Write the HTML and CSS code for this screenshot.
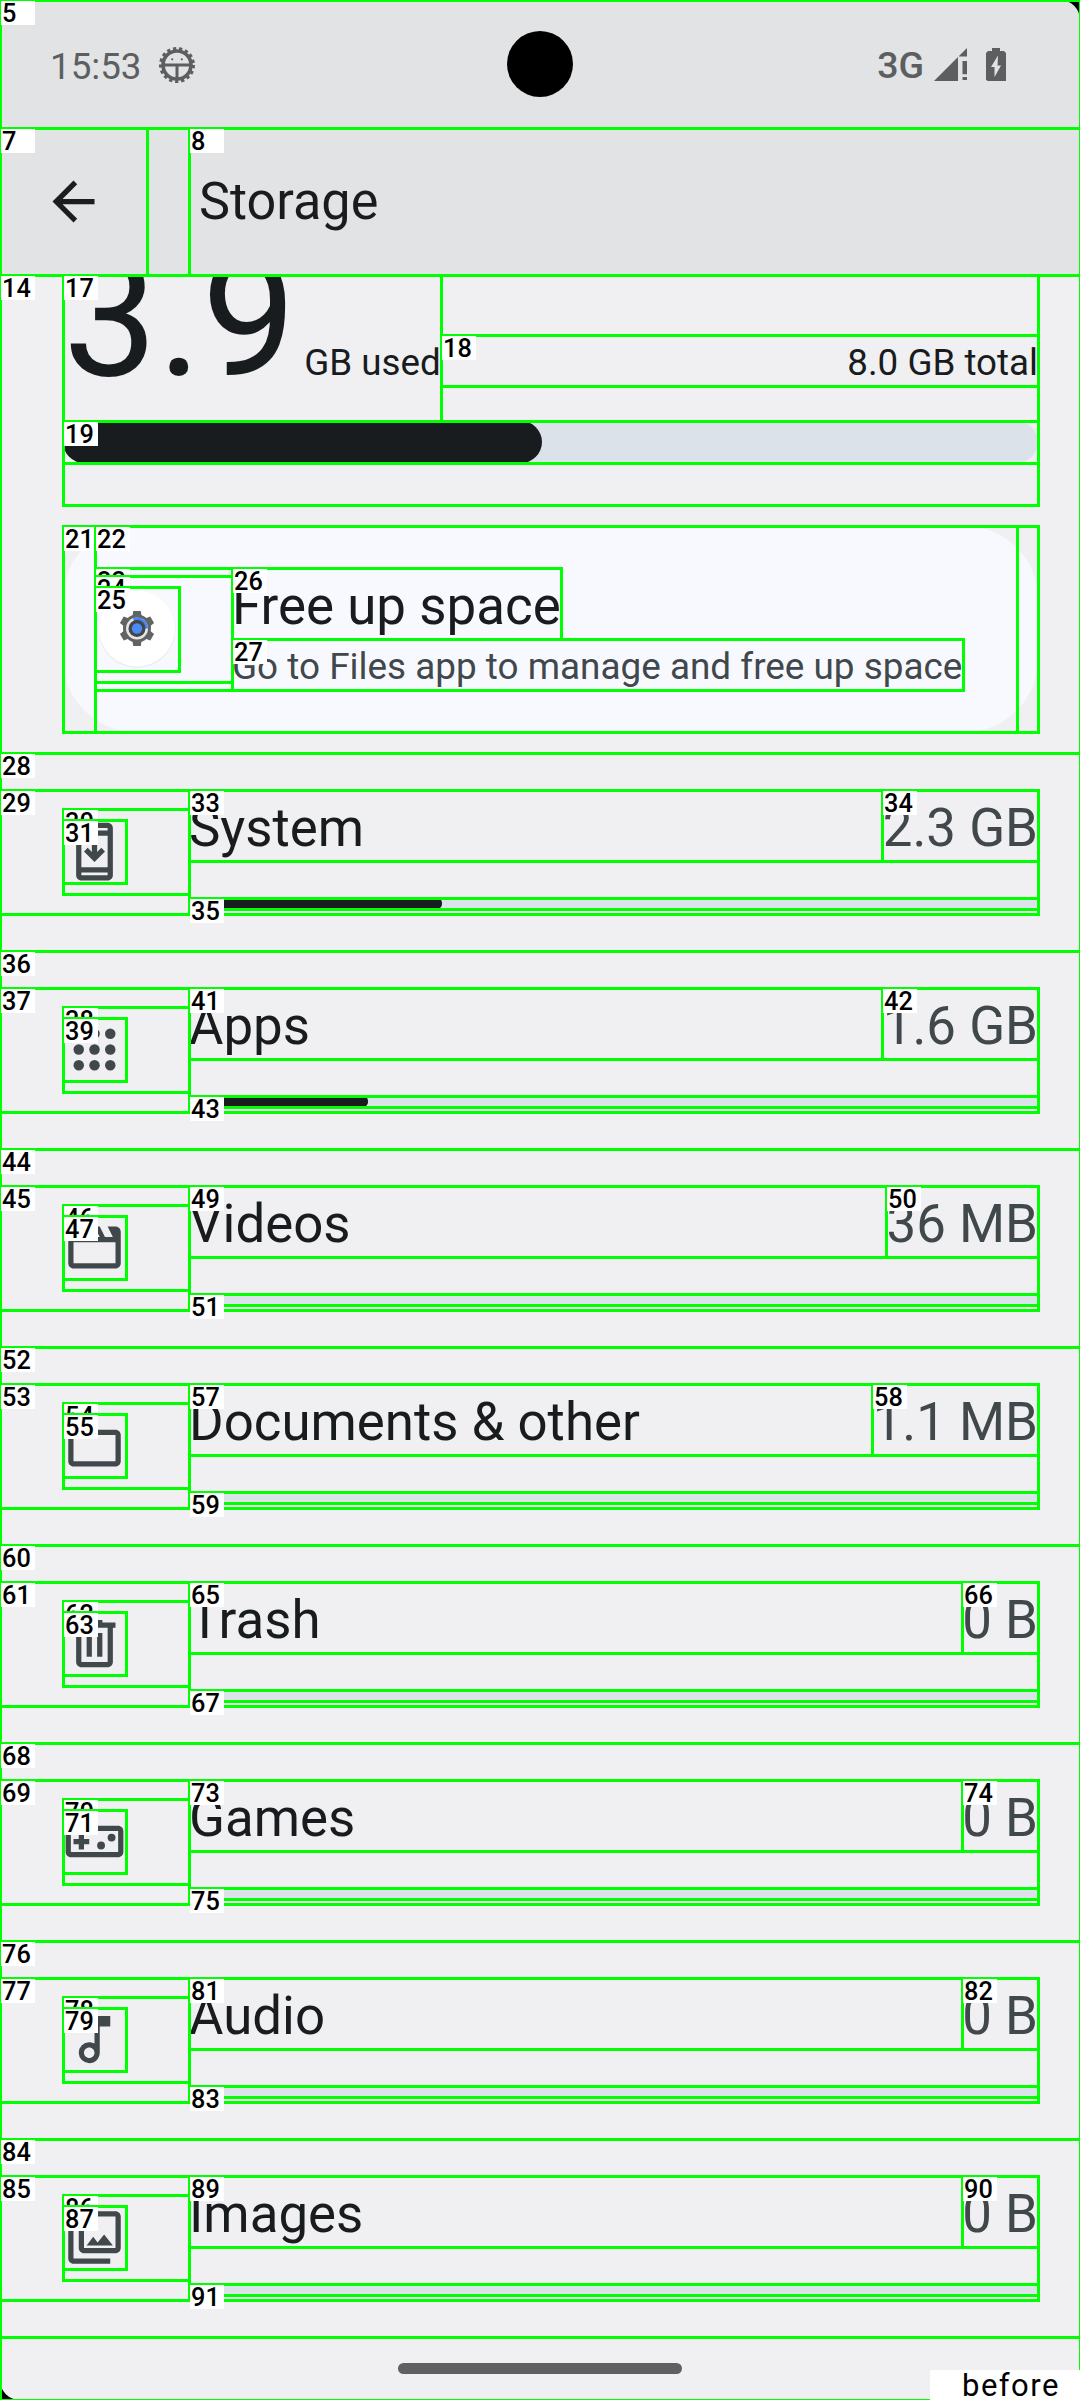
FILE: index.html
```html
<!DOCTYPE html>
<html lang="en">
<head>
<meta charset="utf-8">
<title>Storage</title>
<link rel="stylesheet" href="styles.css">
</head>
<body>
<div class="screen">
  <header class="status">
    <span class="time">15:53</span>
    <svg class="debug" viewBox="0 0 38 38" width="38" height="38">
      <circle class="teeth" cx="19" cy="19" r="16"/>
      <circle class="rim" cx="19" cy="19" r="14"/>
      <path d="M6 17.600h26v3H20.500V32h-3V20.600H6z"/>
      <circle cx="14.200" cy="13.300" r="1.100"/><circle cx="23.800" cy="13.300" r="1.100"/>
    </svg>
    <span class="camera"></span>
    <span class="net">3G</span>
    <svg class="signal" viewBox="0 0 33 33" width="33" height="33"><path d="M0 33L24 9v24zM25 8l8-8v8.500h-8zM28.500 13H33v13.300h-4.500zM28.500 29H33v3h-4.500z"/></svg>
    <svg class="battery" viewBox="0 0 20 33" width="20" height="33"><path fill-rule="evenodd" d="M6 0h8v3h4l2 2v28H2l-2-1V5l2-2h4zM12 7.500L5 19h3.500v10L15 17.500h-3.500z"/></svg>
    <svg class="corner" viewBox="0 0 20 20" width="20" height="20"><path d="M0 0h20v20A20 20 0 0 0 0 0z"/></svg>
  </header>
  <div class="box full"><span class="tag">5</span></div>
  <nav class="appbar">
    <svg class="back" viewBox="0 0 24 24" width="63" height="63"><path d="M20 11H7.830l5.590-5.590L12 4l-8 8 8 8 1.410-1.410L7.830 13H20v-2z"/></svg>
    <h1 class="title">Storage</h1>
    <div class="box bar-all"></div>
    <div class="box bar-back"><span class="tag">7</span></div>
    <div class="box bar-title"><span class="tag">8</span></div>
  </nav>
  <main class="content">
    <div class="box list"><span class="tag">14</span></div>
    <section class="usage">
      <div class="totals">
        <div class="used"><span class="big">3.9</span><span class="unit">GB used</span></div>
        <span class="total">8.0 GB total</span>
      </div>
      <div class="meter"><div class="meter-fill"></div></div>
      <div class="box u-all"></div>
      <div class="box u-used"><span class="tag">17</span></div>
      <div class="box u-total"><span class="tag">18</span></div>
      <div class="box u-meter"><span class="tag">19</span></div>
    </section>
    <section class="card">
      <svg class="card-icon" viewBox="0 0 84 84" width="84" height="84">
        <circle cx="42" cy="42.500" r="38.500" fill="#eceef3"/>
        <circle cx="42" cy="41.500" r="38" fill="#fff"/>
        <g fill="#616365">
          <circle cx="42" cy="41.500" r="14"/>
          <path d="M38.200 24h7.600l1 7h-9.600zM38.200 59h7.600l1-7h-9.600z"/>
          <path d="M38.200 24h7.600l1 7h-9.600zM38.200 59h7.600l1-7h-9.600z" transform="rotate(60 42 41.500)"/>
          <path d="M38.200 24h7.600l1 7h-9.600zM38.200 59h7.600l1-7h-9.600z" transform="rotate(120 42 41.500)"/>
        </g>
        <circle cx="42" cy="41.500" r="11" fill="#e6e6e6"/>
        <path d="M38 31.300A11 11 0 0 1 53 41.500H42z" fill="#4285f4"/>
        <circle cx="42" cy="41.500" r="8.500" fill="#444547"/>
        <circle cx="42" cy="41.500" r="5.200" fill="#4a8af4"/>
      </svg>
      <div class="card-text">
        <span class="card-title">Free up space</span>
        <span class="card-sub">Go to Files app to manage and free up space</span>
      </div>
      <div class="box c-all"><span class="tag">21</span></div>
      <div class="box c-in"><span class="tag">22</span></div>
      <div class="box c-frame"><span class="tag">23</span></div>
      <div class="box c-mid"><span class="tag">24</span></div>
      <div class="box c-icon"><span class="tag">25</span></div>
      <div class="box c-title"><span class="tag">26</span></div>
      <div class="box c-sub"><span class="tag">27</span></div>
    </section>

    <section class="row">
      <svg class="icon" viewBox="0 0 24 24"><path d="M17 1H7c-1.100 0-2 .9-2 2v18c0 1.100.9 2 2 2h10c1.100 0 2-.9 2-2V3c0-1.100-.9-2-2-2zm0 20H7v-1h10v1zm0-3H7V6h10v12zm0-14H7V3h10v1zM12 16l4-4-1.410-1.410L13 12.170V8h-2v4.170l-1.590-1.580L8 12z"/></svg>
      <div class="body"><div class="line"><span class="name">System</span><span class="size">2.3 GB</span></div><div class="track"><div class="fill" style="width:253px"></div></div></div>
      <div class="box r-all"><span class="tag">28</span></div><div class="box r-in"><span class="tag">29</span></div><div class="box r-frame"><span class="tag">30</span></div><div class="box r-icon"><span class="tag">31</span></div><div class="box r-body"></div><div class="box r-name gb"><span class="tag">33</span></div><div class="box r-size gb"><span class="tag">34</span></div><div class="box r-track"><span class="tag">35</span></div>
    </section>
    <section class="row">
      <svg class="icon" viewBox="0 0 24 24"><circle cx="6" cy="6" r="2"/><circle cx="12" cy="6" r="2"/><circle cx="18" cy="6" r="2"/><circle cx="6" cy="12" r="2"/><circle cx="12" cy="12" r="2"/><circle cx="18" cy="12" r="2"/><circle cx="6" cy="18" r="2"/><circle cx="12" cy="18" r="2"/><circle cx="18" cy="18" r="2"/></svg>
      <div class="body"><div class="line"><span class="name">Apps</span><span class="size">1.6 GB</span></div><div class="track"><div class="fill" style="width:179px"></div></div></div>
      <div class="box r-all"><span class="tag">36</span></div><div class="box r-in"><span class="tag">37</span></div><div class="box r-frame"><span class="tag">38</span></div><div class="box r-icon"><span class="tag">39</span></div><div class="box r-body"></div><div class="box r-name gb"><span class="tag">41</span></div><div class="box r-size gb"><span class="tag">42</span></div><div class="box r-track"><span class="tag">43</span></div>
    </section>
    <section class="row">
      <svg class="icon" viewBox="0 0 24 24"><path fill-rule="evenodd" d="M4 4l2 4h3L7 4h2l2 4h3l-2-4h2l2 4h3l-2-4h3c1.100 0 2 .9 2 2v12c0 1.100-.9 2-2 2H4c-1.100 0-2-.9-2-2V6c0-1.100.9-2 2-2zm0 6v8h16v-8z"/></svg>
      <div class="body"><div class="line"><span class="name">Videos</span><span class="size">36 MB</span></div><div class="track"></div></div>
      <div class="box r-all"><span class="tag">44</span></div><div class="box r-in"><span class="tag">45</span></div><div class="box r-frame"><span class="tag">46</span></div><div class="box r-icon"><span class="tag">47</span></div><div class="box r-body"></div><div class="box r-name mb"><span class="tag">49</span></div><div class="box r-size mb"><span class="tag">50</span></div><div class="box r-track"><span class="tag">51</span></div>
    </section>
    <section class="row">
      <svg class="icon" viewBox="0 0 24 24"><path d="M20 6h-8l-2-2H4c-1.100 0-2 .9-2 2v12c0 1.100.9 2 2 2h16c1.100 0 2-.9 2-2V8c0-1.100-.9-2-2-2zm0 12H4V8h16v10z"/></svg>
      <div class="body"><div class="line"><span class="name">Documents &amp; other</span><span class="size">1.1 MB</span></div><div class="track"></div></div>
      <div class="box r-all"><span class="tag">52</span></div><div class="box r-in"><span class="tag">53</span></div><div class="box r-frame"><span class="tag">54</span></div><div class="box r-icon"><span class="tag">55</span></div><div class="box r-body"></div><div class="box r-name mbw"><span class="tag">57</span></div><div class="box r-size mbw"><span class="tag">58</span></div><div class="box r-track"><span class="tag">59</span></div>
    </section>
    <section class="row">
      <svg class="icon" viewBox="0 0 24 24"><path fill-rule="evenodd" d="M7 21c-1.100 0-2-.9-2-2V6H4V4h5V3h6v1h5v2h-1v13c0 1.100-.9 2-2 2zM17 6H7v13h10zM9 17h2V8H9zM13 17h2V8h-2z"/></svg>
      <div class="body"><div class="line"><span class="name">Trash</span><span class="size">0 B</span></div><div class="track"></div></div>
      <div class="box r-all"><span class="tag">60</span></div><div class="box r-in"><span class="tag">61</span></div><div class="box r-frame"><span class="tag">62</span></div><div class="box r-icon"><span class="tag">63</span></div><div class="box r-body"></div><div class="box r-name"><span class="tag">65</span></div><div class="box r-size"><span class="tag">66</span></div><div class="box r-track"><span class="tag">67</span></div>
    </section>
    <section class="row">
      <svg class="icon" viewBox="0 0 24 24"><path d="M21 6H3c-1.100 0-2 .9-2 2v8c0 1.100.9 2 2 2h18c1.100 0 2-.9 2-2V8c0-1.100-.9-2-2-2zm0 10H3V8h18v8zM6 15h2v-2h2v-2H8V9H6v2H4v2h2z"/><circle cx="14.500" cy="13.500" r="1.500"/><circle cx="18.500" cy="10.500" r="1.500"/></svg>
      <div class="body"><div class="line"><span class="name">Games</span><span class="size">0 B</span></div><div class="track"></div></div>
      <div class="box r-all"><span class="tag">68</span></div><div class="box r-in"><span class="tag">69</span></div><div class="box r-frame"><span class="tag">70</span></div><div class="box r-icon"><span class="tag">71</span></div><div class="box r-body"></div><div class="box r-name"><span class="tag">73</span></div><div class="box r-size"><span class="tag">74</span></div><div class="box r-track"><span class="tag">75</span></div>
    </section>
    <section class="row">
      <svg class="icon" viewBox="0 0 24 24"><path d="M12 3v10.550c-.59-.34-1.270-.55-2-.55a4 4 0 1 0 0 8c2.220 0 4-1.790 4-4V7h4V3h-6zm-2 16c-1.100 0-2-.9-2-2s.9-2 2-2 2 .9 2 2-.9 2-2 2z"/></svg>
      <div class="body"><div class="line"><span class="name">Audio</span><span class="size">0 B</span></div><div class="track"></div></div>
      <div class="box r-all"><span class="tag">76</span></div><div class="box r-in"><span class="tag">77</span></div><div class="box r-frame"><span class="tag">78</span></div><div class="box r-icon"><span class="tag">79</span></div><div class="box r-body"></div><div class="box r-name"><span class="tag">81</span></div><div class="box r-size"><span class="tag">82</span></div><div class="box r-track"><span class="tag">83</span></div>
    </section>
    <section class="row">
      <svg class="icon" viewBox="0 0 24 24"><path d="M20 4v12H8V4h12m0-2H8c-1.100 0-2 .9-2 2v12c0 1.100.9 2 2 2h12c1.100 0 2-.9 2-2V4c0-1.100-.9-2-2-2zm-8.500 9.670l1.690 2.260 2.480-3.100L19 15H9zM2 6v14c0 1.100.9 2 2 2h14v-2H4V6H2z"/></svg>
      <div class="body"><div class="line"><span class="name">Images</span><span class="size">0 B</span></div><div class="track"></div></div>
      <div class="box r-all"><span class="tag">84</span></div><div class="box r-in"><span class="tag">85</span></div><div class="box r-frame"><span class="tag">86</span></div><div class="box r-icon"><span class="tag">87</span></div><div class="box r-body"></div><div class="box r-name"><span class="tag">89</span></div><div class="box r-size"><span class="tag">90</span></div><div class="box r-track"><span class="tag">91</span></div>
    </section>
  </main>
  <footer class="gesture">
    <span class="pill"></span>
    <svg class="corner-low" viewBox="0 0 20 20" width="20" height="20"><path d="M0 0v20h20A20 20 0 0 1 0 0z"/></svg>
  </footer>
  <div class="caption">before</div>
</div>
</body>
</html>
```
FILE: styles.css
```css
* { box-sizing: border-box; }
body { margin: 0; font-family: Roboto, sans-serif; color: #191c1e; }
.screen { position: relative; z-index: 0; width: 1080px; height: 2400px; overflow: hidden; background: #f0f0f2; display: flex; flex-direction: column; }

/* status bar */
.status { position: relative; flex: none; height: 128px; background: #e2e3e5; color: #5d5e60; fill: #5d5e60; display: flex; align-items: center; padding: 2px 74px 0 50px; }
.time { font-size: 36.75px; line-height: 44px; margin-top: 3px; }
.debug { margin-left: 16px; }
.debug circle.teeth { fill: none; stroke: #5d5e60; stroke-width: 4; stroke-dasharray: 3.2 2.713; }
.debug circle.rim { fill: none; stroke: #5d5e60; stroke-width: 3.6; }
.camera { position: absolute; left: 507px; top: 31px; width: 66px; height: 66px; border-radius: 50%; background: #000; }
.net { margin-left: auto; font-size: 37.5px; line-height: 44px; font-weight: 500; }
.signal { margin: -2px 19px 0 10px; }
.battery { margin-top: -2px; }
.corner { position: absolute; right: 0; top: 0; fill: #000; }

/* app bar */
.appbar { position: relative; flex: none; height: 147px; background: #e2e3e5; display: flex; align-items: center; padding-left: 42px; }
.back { fill: #1d1d1d; }
.title { margin: 1px 0 0 94px; font-size: 52.2px; line-height: 62px; font-weight: 400; }

/* content */
.content { position: relative; flex: none; height: 2062px; }
.usage { position: relative; height: 230px; padding: 0 42px 0 63px; }
.totals { height: 146px; overflow: hidden; display: flex; justify-content: space-between; align-items: flex-end; line-height: 60px; padding-bottom: 28px; }
.used { display: flex; align-items: baseline; white-space: nowrap; }
.big { font-size: 168px; }
.unit { font-size: 36.75px; margin-left: 8px; }
.total { font-size: 36.75px; line-height: 52px; padding-bottom: 4px; }
.meter { height: 42px; border-radius: 21px; background: #dce2e9; }
.meter-fill { width: 479px; height: 42px; border-radius: 21px; background: #191c1e; }

.card { position: relative; height: 206px; margin: 21px 42px 21px 63px; border-radius: 73px; background: #f8f9fe; display: flex; padding: 42px 21px 0 32px; }
.card-icon { flex: none; margin: 19px 53px 0 0; }
.card-text { display: flex; flex-direction: column; white-space: nowrap; }
.card-title { height: 71px; font-size: 52.9px; line-height: 76px; }
.card-sub { height: 51px; font-size: 36.88px; line-height: 55px; color: #40484c; }

.row { position: relative; height: 198px; padding: 37px 42px 37px 63px; display: flex; }
.icon { flex: none; width: 63px; height: 63px; margin: 30px 63px 0 0; fill: #40484c; }
.body { flex: 1; }
.line { height: 71px; line-height: 76px; display: flex; justify-content: space-between; font-size: 52.8px; }
.size { color: #40484c; }
.track { margin-top: 37px; height: 11px; border-radius: 5px; background: #dce2e9; }
.fill { height: 11px; border-radius: 5px; background: #191c1e; }

.gesture { position: relative; flex: 1; display: flex; justify-content: center; padding-top: 26px; }
.pill { width: 284px; height: 11px; border-radius: 6px; background: #606060; }
.corner-low { position: absolute; left: 0; bottom: 0; fill: #000; z-index: -1; }

/* element outlines laid over the screen */
.box { position: absolute; border: 3px solid #0f0; }
.tag { position: absolute; left: -1px; top: -1px; width: 34px; height: 24px; padding-left: 1px; background: #fff; color: #000; font-size: 25.3px; line-height: 26px; font-weight: 500; letter-spacing: .2px; }
.full { left: -1px; top: -1px; width: 1083px; height: 2403px; }
.bar-all { left: -1px; top: -1px; width: 1083px; height: 150px; }
.bar-back { left: -1px; top: -1px; width: 150px; height: 150px; }
.bar-title { left: 188px; top: -1px; width: 894px; height: 150px; }
.list { left: -1px; top: -1px; width: 1083px; height: 2065px; }
.u-all { left: 62px; top: -1px; width: 978px; height: 233px; }
.u-used { left: 62px; top: -1px; width: 381px; height: 149px; }
.u-total { left: 440px; top: 59px; width: 600px; height: 54px; }
.u-meter { left: 62px; top: 145px; width: 978px; height: 45px; }
.c-all { left: -1px; top: -1px; width: 978px; height: 209px; }
.c-in { left: 31px; top: -1px; width: 925px; height: 209px; }
.c-frame { left: 31px; top: 41px; width: 140px; height: 125px; }
.c-mid { left: 31px; top: 49px; width: 140px; height: 109px; }
.c-icon { left: 31px; top: 60px; width: 87px; height: 87px; }
.c-title { left: 168px; top: 41px; width: 332px; height: 74px; }
.c-sub { left: 168px; top: 112px; width: 734px; height: 54px; }
.r-all { left: -1px; top: -1px; width: 1083px; height: 201px; }
.r-in { left: -1px; top: 36px; width: 1041px; height: 127px; }
.r-frame { left: 62px; top: 55px; width: 129px; height: 88px; }
.r-icon { left: 62px; top: 66px; width: 66px; height: 66px; }
.r-body { left: 188px; top: 36px; width: 852px; height: 127px; }
.r-name { left: 188px; top: 36px; right: 116px; height: 74px; }
.r-size { left: 961px; top: 36px; right: 40px; height: 74px; }
.r-name.gb { right: 196px; }
.r-size.gb { left: 881px; }
.r-name.mb { right: 192px; }
.r-size.mb { left: 885px; }
.r-name.mbw { right: 206px; }
.r-size.mbw { left: 871px; }
.r-track { left: 188px; top: 144px; width: 852px; height: 14px; }

.caption { position: absolute; right: 0; bottom: 0; width: 150px; height: 30px; padding-left: 32px; background: #fff; color: #000; font-size: 31px; line-height: 32px; letter-spacing: 1.5px; }
```
